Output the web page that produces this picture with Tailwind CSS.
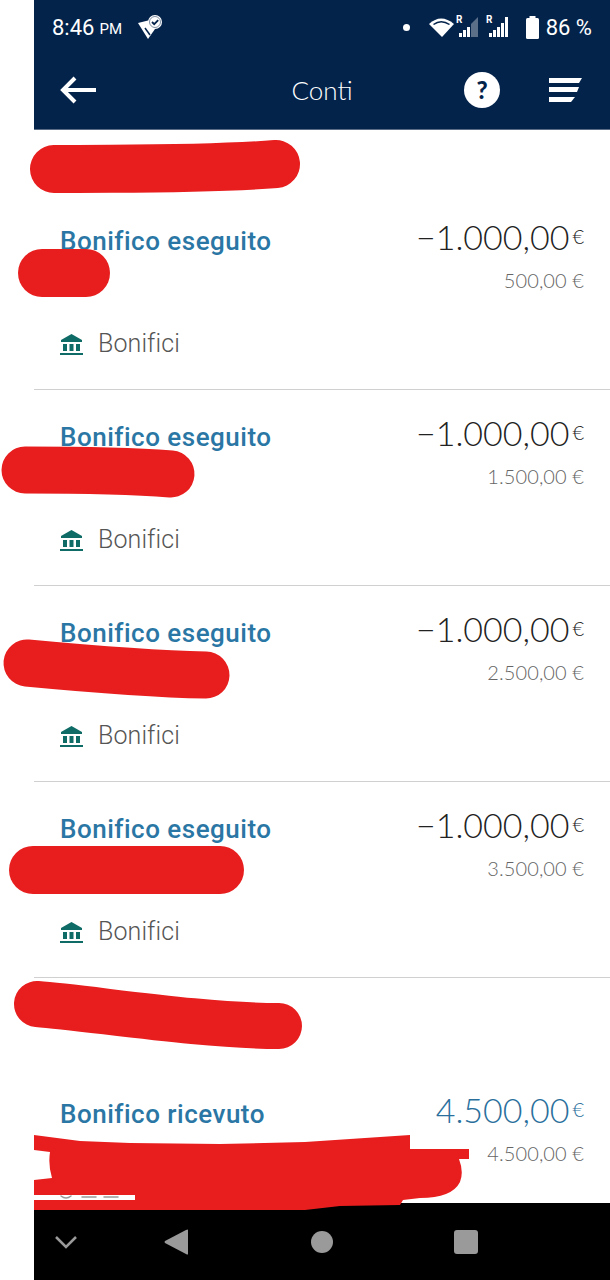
<!DOCTYPE html>
<html lang="en">

<head>
  <meta charset="UTF-8" />
  <meta name="viewport" content="width=device-width, initial-scale=1.0" />
  <title>Conti</title>
  <script src="https://cdn.jsdelivr.net/npm/@tailwindcss/browser@4"></script>
</head>

<body class="relative bg-white font-['Lato',sans-serif] overflow-hidden">
  <div class="relative w-[610px] h-[1280px] pl-[34px] overflow-hidden">
    <div class="flex flex-col h-full">

      <!-- Status bar -->
      <div class="h-[54px] shrink-0 bg-[#04234b] flex items-center text-white font-['Roboto',sans-serif] pl-[18px] pr-[18px]">
        <span class="text-[22px]">8:46</span>
        <span class="text-[15px] ml-[5px] mt-[4px]">PM</span>
        <svg class="ml-[15px]" width="26" height="26" viewBox="0 0 26 26" fill="none">
          <path d="M1 9 L13 6 L18 15 L11 25 Z" fill="#fff" />
          <path d="M8 14 L13 21" stroke="#04234b" stroke-width="1.500" />
          <circle cx="18" cy="8" r="7" fill="#fff" />
          <circle cx="18" cy="8" r="5.500" fill="none" stroke="#04234b" stroke-width=".5" />
          <path d="M15 8 l2.200 2.200 l4 -4" stroke="#04234b" stroke-width="1.800" />
        </svg>
        <span class="ml-auto w-[7px] h-[7px] rounded-full bg-white"></span>
        <svg class="ml-[19px]" width="84" height="28" viewBox="0 0 84 28" fill="#fff">
          <path d="M0 11 Q12 0 25 11 L13 24 Z" />
          <path d="M4 11 Q12 5 21 11 L20 12 Q12 7 5 12 Z" fill="#04234b" />
          <path d="M30 24 h3 v-4 h-3 Z M34 24 h3 v-7 h-3 Z M38 24 h3 v-10 h-3 Z" />
          <path d="M42 24 v-13 l7 -7 v20 Z" fill="#fff" fill-opacity=".35" />
          <path d="M60 24 h3 v-4 h-3 Z M64 24 h3 v-7 h-3 Z M68 24 h3 v-10 h-3 Z M72 24 h3 v-14 h-3 Z M76 24 h3 v-20 h-3 Z" />
          <text x="27" y="10" font-size="10" font-weight="700" font-family="Roboto">R</text>
          <text x="57" y="10" font-size="10" font-weight="700" font-family="Roboto">R</text>
        </svg>
        <svg class="ml-[13px]" width="13" height="23" viewBox="0 0 13 23" fill="#fff">
          <rect x="3.500" y="0" width="6" height="3" />
          <rect x="0" y="2" width="13" height="21" rx="1.500" />
        </svg>
        <span class="text-[22px] ml-[7px]">86 %</span>
      </div>

      <!-- Toolbar -->
      <div class="relative h-[76px] shrink-0 bg-[#04234b] border-b border-[#5b6d86] flex items-center pl-[26px] pr-[28px] pb-[4px] text-white">
        <svg width="37" height="28" viewBox="0 0 37 28" fill="none" stroke="#fff" stroke-width="4">
          <path d="M36 14 H3" />
          <path d="M15 2 L3 14 L15 26" />
        </svg>
        <span class="absolute left-0 right-0 top-[17px] text-center text-[26px] font-light">Conti</span>
        <span class="ml-auto w-[36px] h-[36px] rounded-full bg-white text-[#04234b] flex items-center justify-center text-[24px] font-black">?</span>
        <svg class="ml-[48px]" width="34" height="26" viewBox="0 0 34 26" fill="#fff">
          <path d="M1 1 H34 L31 6 H1 Z" />
          <path d="M1 10 H31 L29 15 H1 Z" />
          <path d="M1 20 H27 L23 25 H1 Z" />
        </svg>
      </div>

      <!-- Movements -->
      <div class="flex-1 overflow-hidden">
        <div class="h-[64px]"></div>

        <div class="h-[196px] border-b border-[#d0d0d0] pt-[32px] pl-[26px] pr-[26px] flex justify-between">
          <div>
            <div class="font-['Roboto',sans-serif] text-[26px] leading-[30px] font-medium tracking-[0.5px] text-[#2a76a4]">Bonifico eseguito</div>
            <div class="flex items-center mt-[73px] font-['Roboto',sans-serif] text-[25px] leading-[30px] font-light tracking-[0.1px] text-[#555]">
              <svg width="23" height="23" viewBox="0 0 23 23" fill="#0f6b66">
                <path d="M11.500 1 L22 7 V9 H1 V7 Z" />
                <path d="M3 11 h4 v7 h-4 Z M9.500 11 h4 v7 h-4 Z M16 11 h4 v7 h-4 Z" />
                <path d="M0 20 h23 v2 h-23 Z" />
              </svg>
              <span class="ml-[15px]">Bonifici</span>
            </div>
          </div>
          <div class="text-right -mt-[5px]">
            <div class="text-[34px] leading-[30px] font-light text-[#222]">−1.000,00<span class="text-[20px] ml-[3px] align-[6px]">€</span></div>
            <div class="mt-[14px] text-[20px] leading-[28px] font-light tracking-[0.1px] text-[#666]">500,00 €</div>
          </div>
        </div>

        <div class="h-[196px] border-b border-[#d0d0d0] pt-[32px] pl-[26px] pr-[26px] flex justify-between">
          <div>
            <div class="font-['Roboto',sans-serif] text-[26px] leading-[30px] font-medium tracking-[0.5px] text-[#2a76a4]">Bonifico eseguito</div>
            <div class="flex items-center mt-[73px] font-['Roboto',sans-serif] text-[25px] leading-[30px] font-light tracking-[0.1px] text-[#555]">
              <svg width="23" height="23" viewBox="0 0 23 23" fill="#0f6b66">
                <path d="M11.500 1 L22 7 V9 H1 V7 Z" />
                <path d="M3 11 h4 v7 h-4 Z M9.500 11 h4 v7 h-4 Z M16 11 h4 v7 h-4 Z" />
                <path d="M0 20 h23 v2 h-23 Z" />
              </svg>
              <span class="ml-[15px]">Bonifici</span>
            </div>
          </div>
          <div class="text-right -mt-[5px]">
            <div class="text-[34px] leading-[30px] font-light text-[#222]">−1.000,00<span class="text-[20px] ml-[3px] align-[6px]">€</span></div>
            <div class="mt-[14px] text-[20px] leading-[28px] font-light tracking-[0.1px] text-[#666]">1.500,00 €</div>
          </div>
        </div>

        <div class="h-[196px] border-b border-[#d0d0d0] pt-[32px] pl-[26px] pr-[26px] flex justify-between">
          <div>
            <div class="font-['Roboto',sans-serif] text-[26px] leading-[30px] font-medium tracking-[0.5px] text-[#2a76a4]">Bonifico eseguito</div>
            <div class="flex items-center mt-[73px] font-['Roboto',sans-serif] text-[25px] leading-[30px] font-light tracking-[0.1px] text-[#555]">
              <svg width="23" height="23" viewBox="0 0 23 23" fill="#0f6b66">
                <path d="M11.500 1 L22 7 V9 H1 V7 Z" />
                <path d="M3 11 h4 v7 h-4 Z M9.500 11 h4 v7 h-4 Z M16 11 h4 v7 h-4 Z" />
                <path d="M0 20 h23 v2 h-23 Z" />
              </svg>
              <span class="ml-[15px]">Bonifici</span>
            </div>
          </div>
          <div class="text-right -mt-[5px]">
            <div class="text-[34px] leading-[30px] font-light text-[#222]">−1.000,00<span class="text-[20px] ml-[3px] align-[6px]">€</span></div>
            <div class="mt-[14px] text-[20px] leading-[28px] font-light tracking-[0.1px] text-[#666]">2.500,00 €</div>
          </div>
        </div>

        <div class="h-[196px] border-b border-[#d0d0d0] pt-[32px] pl-[26px] pr-[26px] flex justify-between">
          <div>
            <div class="font-['Roboto',sans-serif] text-[26px] leading-[30px] font-medium tracking-[0.5px] text-[#2a76a4]">Bonifico eseguito</div>
            <div class="flex items-center mt-[73px] font-['Roboto',sans-serif] text-[25px] leading-[30px] font-light tracking-[0.1px] text-[#555]">
              <svg width="23" height="23" viewBox="0 0 23 23" fill="#0f6b66">
                <path d="M11.500 1 L22 7 V9 H1 V7 Z" />
                <path d="M3 11 h4 v7 h-4 Z M9.500 11 h4 v7 h-4 Z M16 11 h4 v7 h-4 Z" />
                <path d="M0 20 h23 v2 h-23 Z" />
              </svg>
              <span class="ml-[15px]">Bonifici</span>
            </div>
          </div>
          <div class="text-right -mt-[5px]">
            <div class="text-[34px] leading-[30px] font-light text-[#222]">−1.000,00<span class="text-[20px] ml-[3px] align-[6px]">€</span></div>
            <div class="mt-[14px] text-[20px] leading-[28px] font-light tracking-[0.1px] text-[#666]">3.500,00 €</div>
          </div>
        </div>

        <div class="h-[88px]"></div>

        <div class="pt-[32px] pl-[26px] pr-[26px] flex justify-between">
          <div class="font-['Roboto',sans-serif] text-[26px] leading-[30px] font-medium tracking-[0.5px] text-[#2a76a4] mt-[1px]">Bonifico ricevuto</div>
          <div class="text-right -mt-[4px]">
            <div class="text-[34px] leading-[30px] font-light text-[#2a6f9c]">4.500,00<span class="text-[20px] ml-[3px] align-[6px]">€</span></div>
            <div class="mt-[14px] text-[20px] leading-[28px] font-light tracking-[0.1px] text-[#666]">4.500,00 €</div>
          </div>
        </div>
      </div>

      <!-- Android nav bar -->
      <div class="relative h-[77px] shrink-0 bg-black flex items-center">
        <svg class="ml-[21px]" width="22" height="14" viewBox="0 0 22 14" fill="none" stroke="#9a9a9a" stroke-width="2.500">
          <path d="M1 2 L11 12 L21 2" />
        </svg>
        <svg class="ml-[87px]" width="24" height="26" viewBox="0 0 24 26" fill="#9a9a9a">
          <path d="M24 1 V25 Q24 26 22 25 L1 14 Q0 13 1 12 L22 1 Q24 0 24 1 Z" />
        </svg>
        <span class="ml-[123px] w-[22px] h-[22px] rounded-full bg-[#9a9a9a]"></span>
        <span class="ml-[121px] w-[24px] h-[24px] rounded-[3px] bg-[#9a9a9a]"></span>
      </div>
    </div>

    <!-- Red redaction scribbles painted over the screenshot -->
    <svg class="absolute inset-0" width="610" height="1280" viewBox="0 0 610 1280" fill="none" stroke="#e81e1e" stroke-linecap="round">
      <path d="M54 169 C120 168 200 170 276 164" stroke-width="48" />
      <path d="M42 273 H86" stroke-width="48" />
      <path d="M25 470 C70 470 120 470 171 474" stroke-width="47" />
      <path d="M27 663 C80 668 150 674 206 675" stroke-width="47" />
      <path d="M33 870 H220" stroke-width="48" />
      <path d="M37 1004 C90 1008 200 1026 279 1026" stroke-width="46" />
      <path stroke="#999" stroke-width="1.500" d="M61 1196 Q66 1200 71 1196 M82 1197 H96 M104 1197 H118" />
      <path stroke="none" fill="#e81e1e" d="M34 1135 L80 1141 L130 1143 L220 1144 L305 1142 L410 1135 V1149 L469 1149 V1159 L459 1159 Q464 1172 460 1182 Q452 1198 420 1198 L403 1200 L400 1205 L340 1206 L305 1210 L34 1210 V1200 L135 1200 L135 1195 L34 1195 V1180 L52 1178 Q48 1165 50 1152 L34 1150 Z" />
    </svg>
  </div>
</body>

</html>
